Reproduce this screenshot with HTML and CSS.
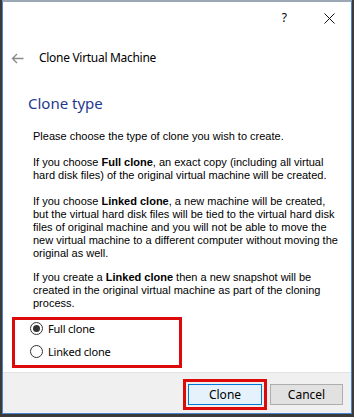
FILE: index.html
```html
<!DOCTYPE html>
<html>
<head>
<meta charset="utf-8">
<title>Clone Virtual Machine</title>
<link rel="stylesheet" href="styles.css">
</head>
<body>
<div class="window">
  <div class="titlebar">
    <span class="help">?</span>
    <span class="close"><svg width="11" height="11" viewBox="0 0 11 11"><path d="M0.5 0.5 L10.5 10.5 M10.5 0.5 L0.5 10.5" stroke="#111" stroke-width="1" fill="none"/></svg></span>
  </div>
  <div class="header">
    <svg class="back" width="13" height="11" viewBox="0 0 13 11"><path d="M12.5 5.5 H1.5 M6 1 L1.5 5.5 L6 10" stroke="#8a8a8a" stroke-width="1.4" fill="none"/></svg>
    <span class="title">Clone Virtual Machine</span>
  </div>
  <div class="content">
    <h1 class="heading">Clone type</h1>
    <p class="para">Please choose the type of clone you wish to create.</p>
    <p class="para">If you choose <b>Full clone</b>, an exact copy (including all virtual<br>hard disk files) of the original virtual machine will be created.</p>
    <p class="para tight">If you choose <b>Linked clone</b>, a new machine will be created,<br>but the virtual hard disk files will be tied to the virtual hard disk<br>files of original machine and you will not be able to move the<br>new virtual machine to a different computer without moving the<br>original as well.</p>
    <p class="para last">If you create a <b>Linked clone</b> then a new snapshot will be<br>created in the original virtual machine as part of the cloning<br>process.</p>
    <div class="options">
      <label class="radio"><span class="circle checked"></span>Full clone</label>
      <label class="radio"><span class="circle"></span>Linked clone</label>
    </div>
  </div>
  <div class="footer">
    <button class="btn primary">Clone</button>
    <button class="btn">Cancel</button>
  </div>
</div>
</body>
</html>
```

FILE: styles.css
```css
html, body {
  margin: 0;
  padding: 0;
}
body {
  background: #3a3a3a;
  width: 354px;
  height: 417px;
  overflow: hidden;
  font-family: "Noto Sans", "Open Sans", sans-serif;
  color: #000;
}
.window {
  box-sizing: border-box;
  margin-left: 2px;
  width: 350px;
  height: 414px;
  background: #fff;
  border: 1px solid #4a86cf;
  border-top: 2px solid #9ba7b5;
  display: flex;
  flex-direction: column;
}
.titlebar {
  height: 32px;
  flex: none;
  display: flex;
  align-items: center;
  justify-content: flex-end;
}
.help {
  font-size: 12px;
  line-height: 14px;
  margin-right: 37px;
}
.close {
  display: flex;
  margin-right: 16px;
}
.header {
  height: 48px;
  flex: none;
  display: flex;
  align-items: center;
}
.back {
  margin-left: 8px;
}
.title {
  margin-left: 15px;
  font-size: 12px;
  line-height: 16px;
  letter-spacing: -0.3px;
}
.content {
  flex: 1;
  display: flex;
  flex-direction: column;
  align-items: flex-start;
}
.heading {
  margin: 10px 0 16px 25px;
  font-size: 15px;
  line-height: 22px;
  font-weight: normal;
  color: #1f3a8c;
}
.para {
  margin: 0 0 13px 30px;
  font-family: "Liberation Sans", Arial, sans-serif;
  font-size: 11px;
  line-height: 13px;
  white-space: nowrap;
}
.para.tight {
  margin-bottom: 11px;
}
.para.last {
  margin-bottom: 7px;
}
.options {
  box-sizing: border-box;
  margin-left: 9px;
  width: 170px;
  height: 51px;
  border: 3px solid #dd0a0a;
  display: flex;
  flex-direction: column;
  gap: 7px;
  padding-left: 15px;
}
.radio {
  display: flex;
  align-items: center;
  height: 16px;
  font-size: 11px;
  letter-spacing: -0.2px;
}
.circle {
  box-sizing: border-box;
  width: 13px;
  height: 13px;
  border: 1px solid #333;
  border-radius: 50%;
  margin-right: 5px;
  display: flex;
  align-items: center;
  justify-content: center;
}
.circle.checked::after {
  content: "";
  width: 7px;
  height: 7px;
  border-radius: 50%;
  background: #333;
}
.footer {
  box-sizing: border-box;
  height: 41px;
  flex: none;
  background: #f0f0f0;
  border-top: 1px solid #e3e3e3;
  display: flex;
  justify-content: flex-end;
  align-items: flex-start;
  gap: 8px;
  padding: 11px 8px 0 0;
}
.btn {
  box-sizing: border-box;
  width: 73px;
  height: 21px;
  padding: 0;
  font-family: "Noto Sans", "Open Sans", sans-serif;
  font-size: 12px;
  color: #000;
  background: #e1e1e1;
  border: 1px solid #adadad;
}
.btn.primary {
  width: 74px;
  background: #e5f1fb;
  border-color: #0078d7;
  outline: 3px solid #dd0a0a;
  outline-offset: 2px;
}
```
